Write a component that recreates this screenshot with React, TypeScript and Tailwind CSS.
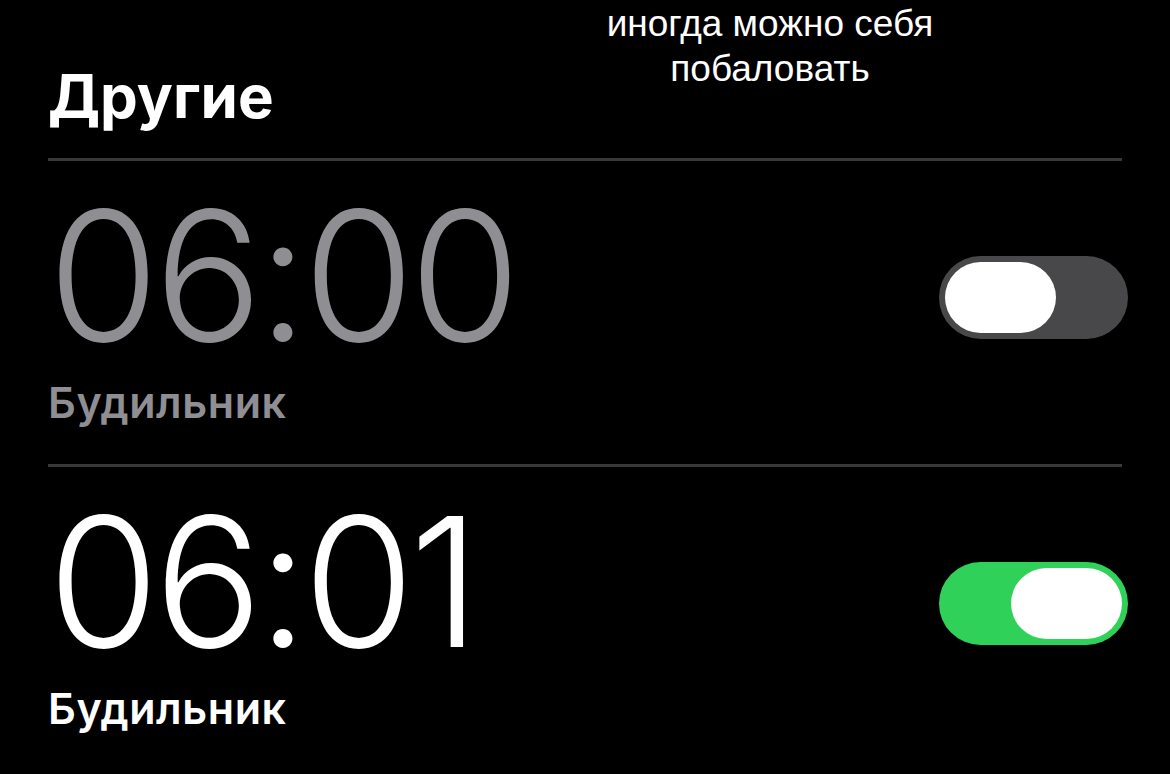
import React, { useState } from 'react';

type Alarm = {
  time: string;
  label: string;
  enabled: boolean;
};

const initialAlarms: Alarm[] = [
  { time: '06:00', label: 'Будильник', enabled: false },
  { time: '06:01', label: 'Будильник', enabled: true },
];

const Toggle: React.FC<{ on: boolean; onChange: () => void }> = ({ on, onChange }) => (
  <button
    onClick={onChange}
    className={`-mr-[6px] flex h-[83px] w-[189px] shrink-0 items-center rounded-full px-[6px] ${
      on ? 'justify-end bg-[#30d158]' : 'justify-start bg-[#48484a]'
    }`}
  >
    <span className="block h-[71px] w-[111px] rounded-full bg-white" />
  </button>
);

const AlarmRow: React.FC<{ alarm: Alarm; onToggle: () => void }> = ({ alarm, onToggle }) => {
  const tone = alarm.enabled ? 'text-white' : 'text-[#8e8e93]';
  return (
    <div className="flex items-start justify-between border-t-[3px] border-[#38383a] pb-[40px]">
      <div className="mt-[45px] flex flex-col">
        <span className={`text-[180px] font-light leading-[140px] tracking-[-5px] ${tone}`}>{alarm.time}</span>
        <span className={`mt-[35px] text-[43px] font-semibold leading-none tracking-[0.6px] ${tone}`}>
          {alarm.label}
        </span>
      </div>
      <div className="mt-[95px]">
        <Toggle on={alarm.enabled} onChange={onToggle} />
      </div>
    </div>
  );
};

export default function App() {
  const [alarms, setAlarms] = useState(initialAlarms);

  const toggle = (i: number) =>
    setAlarms(prev => prev.map((a, j) => (j === i ? { ...a, enabled: !a.enabled } : a)));

  return (
    <div
      className="relative h-[774px] w-[1170px] overflow-hidden bg-black px-12"
      style={{ fontFamily: 'Inter, "Noto Sans", sans-serif' }}
    >
      {/* caption laid over the screen */}
      <div
        className="absolute left-[570px] top-[1px] w-[400px] text-center text-[37px] leading-[45px] text-white"
        style={{ fontFamily: '"Liberation Sans", Arial, sans-serif' }}
      >
        иногда можно себя
        <br />
        побаловать
      </div>

      <h1 className="pt-[66px] text-[60px] font-bold leading-none text-white">Другие</h1>

      <div className="mt-[32px]">
        {alarms.map((alarm, i) => (
          <AlarmRow key={i} alarm={alarm} onToggle={() => toggle(i)} />
        ))}
      </div>
    </div>
  );
}
